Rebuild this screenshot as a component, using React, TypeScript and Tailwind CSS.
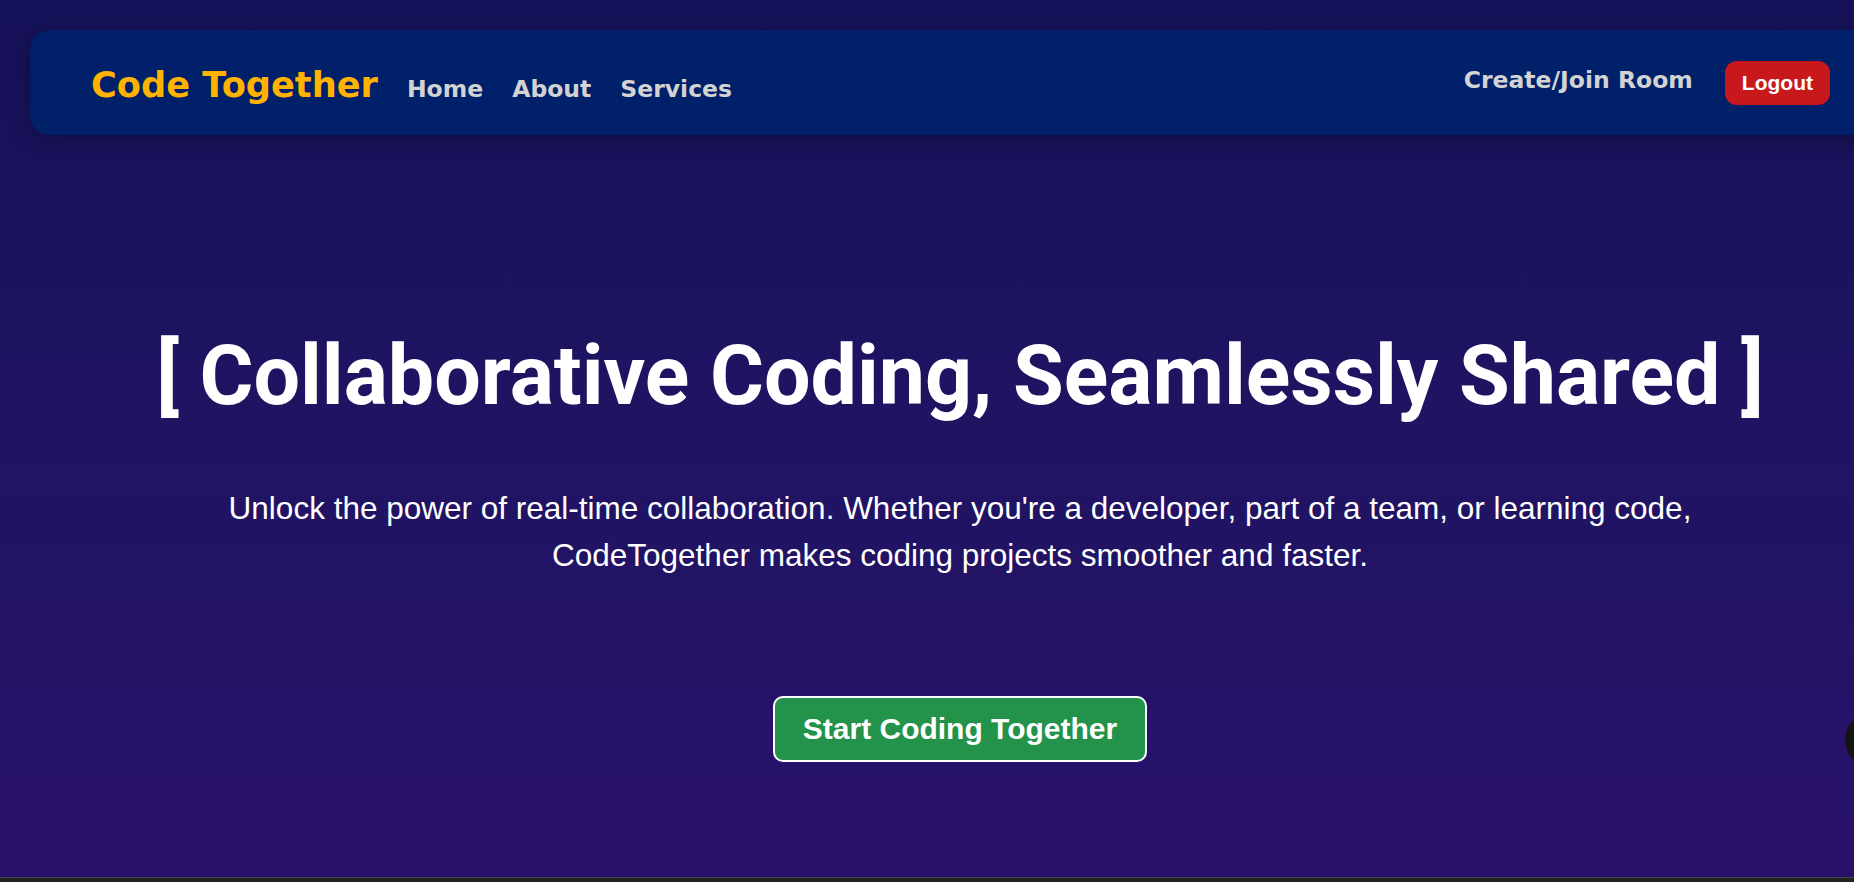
import React from "react";

export default function App() {
  return (
    <div className="w-screen h-[882px] overflow-hidden bg-[#222222]">
      <div className="relative w-[1920px] h-[877px] bg-gradient-to-b from-[#16125a] via-[#1f1462] to-[#29106b] flex flex-col">
        <nav className="mt-[30px] mx-[30px] h-[105px] rounded-[20px] bg-[#00206a] shadow-[0_4px_24px_rgba(0,0,0,0.35)] flex items-center justify-between pl-[61px] pr-[60px] font-['DejaVu_Sans',sans-serif] font-bold">
          <div className="flex items-baseline pt-[5px] gap-[29px]">
            <span className="text-[35.2px] text-[#ffb300] leading-normal">Code Together</span>
            <a className="text-[23.5px] text-[#d3d3d3]">Home</a>
            <a className="text-[23.5px] text-[#d3d3d3]">About</a>
            <a className="text-[23.5px] text-[#d3d3d3]">Services</a>
          </div>
          <div className="flex items-center gap-[32px]">
            <a className="text-[23.5px] text-[#d3d3d3] -mt-[3px]">Create/Join Room</a>
            <button className="h-[44px] px-[17px] rounded-[12px] bg-[#c8181c] text-white text-[21px] font-bold font-['Liberation_Sans',Arial,sans-serif]">
              Logout
            </button>
          </div>
        </nav>

        <section className="flex flex-col items-center pt-[200px]">
          <h1 className="text-[82.5px] leading-none font-bold text-white font-['Roboto',sans-serif]">
            [ Collaborative Coding, Seamlessly Shared ]
          </h1>
          <p className="mt-[67px] text-center text-white text-[31.5px] leading-[47px] font-['Liberation_Sans',Arial,sans-serif]">
            Unlock the power of real-time collaboration. Whether you're a developer, part of a team, or learning code,
            <br />
            CodeTogether makes coding projects smoother and faster.
          </p>
          <button className="mt-[117px] h-[66px] px-[28px] rounded-[10px] border-2 border-white bg-[#23924a] text-white text-[30px] font-bold font-['Liberation_Sans',Arial,sans-serif]">
            Start Coding Together
          </button>
        </section>

        <div className="absolute left-[1845px] top-[712px] w-[56px] h-[56px] rounded-full bg-[#141414]" />
      </div>
      <div className="h-[5px] border-t border-[#474747] bg-[#222222]" />
    </div>
  );
}
